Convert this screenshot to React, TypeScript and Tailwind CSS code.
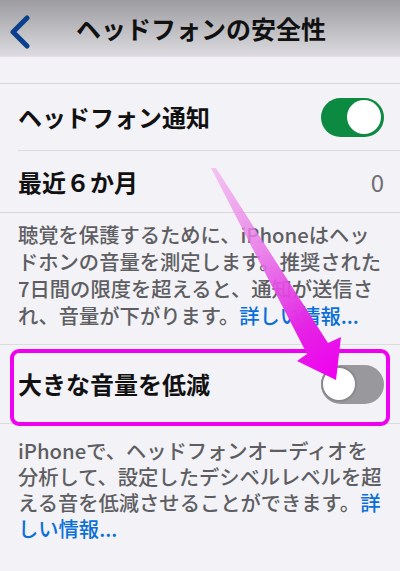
import React from "react";

const JP = { fontFamily: '"Noto Sans CJK JP", "Noto Sans", sans-serif' };

function Toggle({ on }: { on: boolean }) {
  return on ? (
    <div className="w-[63px] h-[39px] rounded-full bg-[#0d8a41] flex items-center justify-end pr-[3px]">
      <div className="w-[34px] h-[34px] rounded-full bg-white" />
    </div>
  ) : (
    <div className="w-[63px] h-[39px] rounded-full bg-[#98989d] flex items-center justify-start">
      <div className="w-[36px] h-[36px] rounded-full bg-white border-[2px] border-[#8a8a8e]" />
    </div>
  );
}

export default function App() {
  return (
    <div className="relative w-[400px] h-[571px] overflow-hidden bg-[#f2f2f7]" style={JP}>
      {/* Header */}
      <div className="h-[57px] bg-gradient-to-b from-[#9c9ca1] to-[#dcdce0] flex items-center relative border-b border-[#f0d8ee]">
        <svg className="absolute left-[8px] top-[15px]" width="24" height="34" viewBox="0 0 24 34">
          <polyline points="19,3 5,17 19,31" fill="none" stroke="#0b3f8c" strokeWidth="5" strokeLinecap="round" strokeLinejoin="round" />
        </svg>
        <div className="flex-1 text-center text-[25px] font-bold text-[#111] leading-none pl-[2px]">
          ヘッドフォンの安全性
        </div>
      </div>
      <div className="h-[27px] border-b border-[#d6d6da]" />

      {/* Row 1 */}
      <div className="h-[67px] flex items-center pl-[18px]">
        <div className="flex-1 h-full flex items-center justify-between pr-[16px] border-b border-[#dcdcdf]">
          <span className="text-[24px] font-semibold text-[#111] leading-none">ヘッドフォン通知</span>
          <Toggle on />
        </div>
      </div>
      {/* Row 2 */}
      <div className="h-[62px] flex items-center justify-between pl-[18px] pr-[16px] border-b border-[#d6d6da]">
        <span className="text-[24px] font-semibold text-[#111] leading-none">最近６か月</span>
        <span className="text-[24px] text-[#6e6e73] leading-none">0</span>
      </div>

      {/* Description 1 */}
      <div className="pt-[8px] pl-[18px] text-[20.3px] font-medium leading-[27px] text-[#5e5e62] h-[131px]">
        <div className="whitespace-nowrap">聴覚を保護するために、iPhoneはヘッ</div>
        <div className="whitespace-nowrap">ドホンの音量を測定します。推奨された</div>
        <div className="whitespace-nowrap">7日間の限度を超えると、通知が送信さ</div>
        <div className="whitespace-nowrap">
          れ、音量が下がります。<span className="text-[#0a6fd6]">詳しい情報...</span>
        </div>
      </div>

      {/* Row 3 */}
      <div className="relative h-[80px] flex items-center justify-between pl-[18px] pr-[16px] border-y border-[#dcdcdf]">
        <span className="text-[24px] font-semibold text-[#111] leading-none">大きな音量を低減</span>
        <Toggle on={false} />
        <div className="absolute left-[10px] right-[10px] top-[4px] bottom-[-3px] border-[4px] border-[#f000f0] rounded-[9px] pointer-events-none" />
      </div>

      {/* Description 2 */}
      <div className="pt-[13px] pl-[18px] text-[20.3px] font-medium leading-[26px] text-[#5e5e62]">
        <div className="whitespace-nowrap">iPhoneで、ヘッドフォンオーディオを</div>
        <div className="whitespace-nowrap">分析して、設定したデシベルレベルを超</div>
        <div className="whitespace-nowrap">
          える音を低減させることができます。<span className="text-[#0a6fd6]">詳</span>
        </div>
        <div className="whitespace-nowrap text-[#0a6fd6]">しい情報...</div>
      </div>

      {/* Arrow annotation */}
      <svg className="absolute left-0 top-0 pointer-events-none" width="400" height="571" viewBox="0 0 400 571">
        <defs>
          <linearGradient id="ag" x1="213" y1="168" x2="335" y2="378" gradientUnits="userSpaceOnUse">
            <stop offset="0" stopColor="#f2b4ee" stopOpacity="0.75" />
            <stop offset="0.4" stopColor="#e870e8" stopOpacity="0.85" />
            <stop offset="0.75" stopColor="#e424e4" stopOpacity="1" />
            <stop offset="1" stopColor="#f000f0" stopOpacity="1" />
          </linearGradient>
        </defs>
        <polygon
          points="211,168 216,168 328,343 341,337 336,380 297,361 307,354"
          fill="url(#ag)"
        />
      </svg>
    </div>
  );
}
